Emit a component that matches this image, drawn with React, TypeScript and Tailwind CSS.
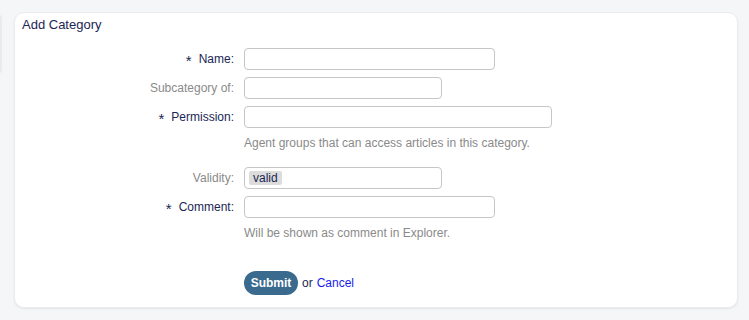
import React from "react";

const font = { fontFamily: '"Liberation Sans", Arial, sans-serif' };

function Label({ text, required, muted }: { text: string; required?: boolean; muted?: boolean }) {
  return (
    <label
      className={`flex items-center justify-end gap-[7px] text-[12px] leading-[16px] ${
        muted ? "text-[#8a8a8a]" : "text-[#1b2654]"
      }`}
    >
      {required && <span className="text-[15px] leading-[10px] pt-[4px] text-[#1b2654]">*</span>}
      <span>{text}:</span>
    </label>
  );
}

function Input({ width }: { width: string }) {
  return (
    <input
      type="text"
      className={`${width} h-[22px] rounded-[4px] border border-[#c6c6c6] bg-white px-1 text-[12px] outline-none`}
    />
  );
}

function Hint({ children }: { children: React.ReactNode }) {
  return (
    <div className="grid grid-cols-[219px_1fr] gap-x-[10px]">
      <div />
      <p className="text-[12px] leading-[16px] text-[#8a8a8a]">{children}</p>
    </div>
  );
}

function Row({ children }: { children: React.ReactNode }) {
  return <div className="grid grid-cols-[219px_1fr] gap-x-[10px] items-center">{children}</div>;
}

export default function App() {
  return (
    <div className="w-[749px] h-[320px] bg-[#f5f6f8] flex pt-[12px]" style={font}>
      <div className="w-[2px] h-[58px] mt-[3px] bg-[#ebebee] rounded-r-[2px]" />
      <div className="ml-[12px] w-[724px] h-[296px] bg-white rounded-[10px] shadow-[0_1px_2px_rgba(0,0,0,0.08)] border border-[#ececf0]">
        <h2 className="pl-[7px] pt-[4px] text-[13px] leading-[16px] text-[#1b2654]">Add Category</h2>
        <form className="mt-[15px] flex flex-col">
          <Row>
            <Label text="Name" required />
            <Input width="w-[251px]" />
          </Row>
          <div className="mt-[7px]">
            <Row>
              <Label text="Subcategory of" muted />
              <Input width="w-[198px]" />
            </Row>
          </div>
          <div className="mt-[7px]">
            <Row>
              <Label text="Permission" required />
              <Input width="w-[308px]" />
            </Row>
          </div>
          <div className="mt-[7px]">
            <Hint>Agent groups that can access articles in this category.</Hint>
          </div>
          <div className="mt-[16px]">
            <Row>
              <Label text="Validity" muted />
              <div className="w-[198px] h-[22px] rounded-[4px] border border-[#c6c6c6] bg-white flex items-center px-[4px]">
                <span className="bg-[#dcdcdc] text-[#1b2654] text-[12px] leading-[14px] px-[4px] rounded-[2px]">valid</span>
              </div>
            </Row>
          </div>
          <div className="mt-[7px]">
            <Row>
              <Label text="Comment" required />
              <Input width="w-[251px]" />
            </Row>
          </div>
          <div className="mt-[7px]">
            <Hint>Will be shown as comment in Explorer.</Hint>
          </div>
          <div className="mt-[30px]">
            <Row>
              <div />
              <div className="flex items-center gap-[4px] text-[12px]">
                <button
                  type="button"
                  className="h-[24px] w-[54px] rounded-full bg-[#3b6a8f] text-white font-bold text-[12px]"
                >
                  Submit
                </button>
                <span className="text-[#1b2654]">or</span>
                <a href="#" className="text-[#1a1aee]">Cancel</a>
              </div>
            </Row>
          </div>
        </form>
      </div>
    </div>
  );
}
